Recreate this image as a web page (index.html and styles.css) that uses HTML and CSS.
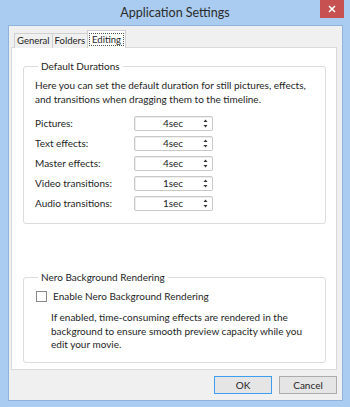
FILE: index.html
```html
<!DOCTYPE html>
<html lang="en">
<head>
    <meta charset="UTF-8">
    <title>Application Settings</title>
    <link rel="stylesheet" href="styles.css">
</head>
<body>
<div class="window">
    <div class="titlebar">
        <span class="title">Application Settings</span>
        <span class="close">
            <svg width="8" height="8" viewBox="0 0 8 8"><path d="M1 1L7 7M7 1L1 7" stroke="#fff" stroke-width="1.6"/></svg>
        </span>
    </div>
    <div class="client">
        <div class="tabs">
            <div class="tab">General</div>
            <div class="tab">Folders</div>
            <div class="tab active"><span class="focus">Editing</span></div>
        </div>
        <div class="panel">
            <fieldset class="group durations">
                <legend>Default Durations</legend>
                <p class="desc">Here you can set the default duration for still pictures, effects, and transitions when dragging them to the timeline.</p>
                <div class="rows">
                    <div class="row"><span class="label">Pictures:</span><div class="spin"><span class="val">4sec</span><svg class="arrows" width="5" height="9" viewBox="0 0 5 9"><path d="M2.5 0.5L4.5 3H0.5Z M0.5 6H4.5L2.5 8.5Z" fill="#333"/></svg></div></div>
                    <div class="row"><span class="label">Text effects:</span><div class="spin"><span class="val">4sec</span><svg class="arrows" width="5" height="9" viewBox="0 0 5 9"><path d="M2.5 0.5L4.5 3H0.5Z M0.5 6H4.5L2.5 8.5Z" fill="#333"/></svg></div></div>
                    <div class="row"><span class="label">Master effects:</span><div class="spin"><span class="val">4sec</span><svg class="arrows" width="5" height="9" viewBox="0 0 5 9"><path d="M2.5 0.5L4.5 3H0.5Z M0.5 6H4.5L2.5 8.5Z" fill="#333"/></svg></div></div>
                    <div class="row"><span class="label">Video transitions:</span><div class="spin"><span class="val">1sec</span><svg class="arrows" width="5" height="9" viewBox="0 0 5 9"><path d="M2.5 0.5L4.5 3H0.5Z M0.5 6H4.5L2.5 8.5Z" fill="#333"/></svg></div></div>
                    <div class="row"><span class="label">Audio transitions:</span><div class="spin"><span class="val">1sec</span><svg class="arrows" width="5" height="9" viewBox="0 0 5 9"><path d="M2.5 0.5L4.5 3H0.5Z M0.5 6H4.5L2.5 8.5Z" fill="#333"/></svg></div></div>
                </div>
            </fieldset>
            <fieldset class="group nero">
                <legend>Nero Background Rendering</legend>
                <label class="check"><span class="box"></span>Enable Nero Background Rendering</label>
                <p class="note">If enabled, time-consuming effects are rendered in the background to ensure smooth preview capacity while you edit your movie.</p>
            </fieldset>
        </div>
        <div class="buttons">
            <button class="btn default">OK</button>
            <button class="btn">Cancel</button>
        </div>
    </div>
</div>
</body>
</html>
```

FILE: styles.css
```css
body {
    margin: 0;
    font-family: Lato, "Noto Sans", sans-serif;
    font-size: 10px;
    color: #1e1e1e;
}
.window {
    width: 350px;
    height: 407px;
    background: #a9ccf0;
    box-sizing: border-box;
    display: flex;
    flex-direction: column;
}
.titlebar {
    height: 25px;
    display: flex;
    justify-content: center;
    align-items: center;
    position: relative;
}
.title {
    font-size: 12.5px;
    color: #2b2b2b;
}
.close {
    position: absolute;
    right: 6px;
    top: 0;
    width: 24px;
    height: 18px;
    background: #c75050;
    display: flex;
    align-items: center;
    justify-content: center;
}
.client {
    margin: 0 7px 0 8px;
    height: 376px;
    background: #f0f0f0;
    border: 1px solid #8eb3dd;
    box-sizing: border-box;
    padding: 4px 5px 0 2px;
    display: flex;
    flex-direction: column;
}
.tabs {
    display: flex;
    align-items: flex-end;
    padding-left: 3px;
    height: 18px;
    position: relative;
    z-index: 1;
    margin-bottom: -1px;
}
.tab {
    height: 15px;
    padding: 0 2px;
    border: 1px solid #d0d0d0;
    border-bottom: none;
    background: #f0f0f0;
    font-size: 9.5px;
    line-height: 14px;
    box-sizing: border-box;
    margin-right: -1px;
}
.tab.active {
    height: 18px;
    background: #fff;
    padding: 2px 1px 0;
}
.focus {
    display: block;
    border: 1px dotted #555;
    line-height: 11px;
    padding: 0 2px;
}
.panel {
    background: #fff;
    border: 1px solid #d9d9d9;
    height: 323px;
    box-sizing: border-box;
    padding: 12px 10px 0 11px;
}
.group {
    border: 1px solid #dcdcdc;
    border-radius: 3px;
    margin: 0;
    padding: 0 0 0 11px;
}
.group legend {
    padding: 0 3px;
    margin-left: 3px;
}
.desc {
    margin: 6px 0 0;
    line-height: 14px;
    padding-right: 10px;
}
.rows {
    margin-top: 7px;
    padding-bottom: 10px;
}
.row {
    display: flex;
    align-items: center;
    height: 20px;
}
.label {
    width: 99px;
}
.spin {
    width: 79px;
    height: 15px;
    border: 1px solid #c8c8c8;
    border-radius: 2px;
    box-sizing: border-box;
    display: flex;
    align-items: center;
    box-shadow: inset 1px 1px 0 #eee;
}
.val {
    flex: 1;
    text-align: center;
    padding-left: 8px;
}
.arrows {
    margin-right: 4px;
}
.nero {
    margin-top: 47px;
    padding-bottom: 10px;
}
.check {
    display: flex;
    align-items: center;
    margin-top: 7px;
}
.box {
    width: 11px;
    height: 11px;
    border: 1px solid #8a8a8a;
    box-sizing: border-box;
    margin: 0 6px 0 1px;
}
.note {
    margin: 9px 0 0 16px;
    line-height: 13.5px;
    padding-right: 20px;
}
.buttons {
    display: flex;
    justify-content: flex-end;
    gap: 7px;
    margin-top: 6px;
}
.btn {
    width: 58px;
    height: 18px;
    font: inherit;
    background: #e5e5e5;
    border: 1px solid #acacac;
    padding: 0;
    color: #1e1e1e;
}
.btn.default {
    border-color: #3c9ef0;
}
```
